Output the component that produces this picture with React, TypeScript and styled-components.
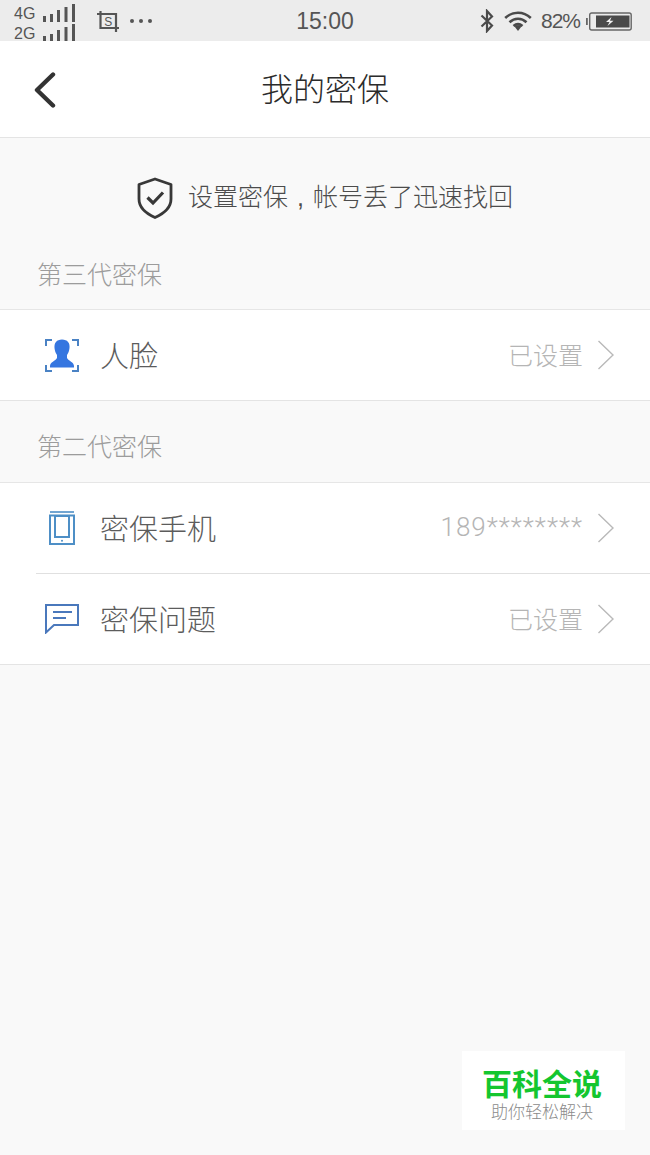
import styled, { createGlobalStyle } from "styled-components"
import { type ReactNode } from "react"

const FONT = `"Noto Sans CJK SC", "Noto Sans", sans-serif`

const GlobalStyle = createGlobalStyle`
    html, body {
        margin: 0;
        padding: 0;
        background: #f9f9f9;
    }
    * {
        box-sizing: border-box;
    }
`

function SignalBars() {
    return (
        <svg width="32" height="18" viewBox="0 0 32 18" fill="#555">
            <rect x="0" y="12" width="3" height="6" />
            <rect x="7" y="10" width="3" height="8" />
            <rect x="14" y="6" width="3" height="12" />
            <rect x="21.5" y="3" width="3" height="15" />
            <rect x="29" y="0" width="3" height="18" />
        </svg>
    )
}

function ScreenshotIcon() {
    return (
        <svg width="22" height="21" viewBox="0 0 22 21" fill="none" stroke="#555">
            <path d="M3.5 0V17H22M0 3H19V21" strokeWidth="2.2" />
            <text x="11.2" y="14.5" textAnchor="middle" fontSize="12" fill="#555" stroke="none" fontFamily="Liberation Sans, sans-serif">
                S
            </text>
        </svg>
    )
}

function BluetoothIcon() {
    return (
        <svg width="14" height="24" viewBox="0 0 14 24" fill="none" stroke="#4a4a4a" strokeWidth="2.2">
            <path d="M1.5 6.5L12 16.5L7 22V2L12 7.5L1.5 17.5" />
        </svg>
    )
}

function WifiIcon() {
    return (
        <svg width="28" height="22" viewBox="0 0 28 22" fill="none" stroke="#4a4a4a" strokeWidth="2.6">
            <path d="M1.2 8C8.5 1 19.5 1 26.8 8" />
            <path d="M5.5 12.2C10.5 7.6 17.5 7.6 22.5 12.2" />
            <path d="M9.5 16C12.3 13.6 15.7 13.6 18.5 16" />
            <path d="M10.5 16.5L14 21L17.5 16.5L14 15Z" fill="#4a4a4a" stroke="none" />
        </svg>
    )
}

function BatteryIcon() {
    return (
        <svg width="46" height="19" viewBox="0 0 46 19" fill="none">
            <rect x="0" y="6" width="1.8" height="7" fill="#666" />
            <rect x="3.7" y="1" width="41.5" height="17" rx="2" stroke="#666" strokeWidth="1.4" />
            <rect x="10" y="3.5" width="33.5" height="12" fill="#4a4a4a" />
            <path d="M25.5 5L20 10H23.5L21.5 14L27.5 8.8H24Z" fill="#f2f2f2" />
        </svg>
    )
}

function BackIcon() {
    return (
        <svg width="22" height="36" viewBox="0 0 22 36" fill="none" stroke="#333" strokeWidth="4.4" strokeLinecap="round" strokeLinejoin="round">
            <path d="M19 2.5L3 18L19 33.5" />
        </svg>
    )
}

function ShieldIcon() {
    return (
        <svg width="36" height="42" viewBox="0 0 36 42" fill="none">
            <path
                d="M18 2L34 7.5V22C34 31 27 36.5 18 40.5C9 36.5 2 31 2 22V7.5Z"
                stroke="#383838"
                strokeWidth="2.8"
                strokeLinejoin="round"
            />
            <path d="M10.5 20.5L16 26L26 15.5" stroke="#383838" strokeWidth="3.2" />
        </svg>
    )
}

function FaceIcon() {
    return (
        <svg width="36" height="35" viewBox="0 0 36 35" fill="none">
            <path
                d="M2 8V2H8M28 2H34V8M2 27V33H8M28 33H34V27"
                stroke="#4a82c4"
                strokeWidth="2"
            />
            <path
                d="M18 1.5C23.5 1.5 26 5 25.5 10C25.2 13 24.3 15 23 17V20C24.5 23 30 24 30 28V29.5H6V28C6 24 11.5 23 13 20V17C11.7 15 10.8 13 10.5 10C10 5 12.5 1.5 18 1.5Z"
                fill="#3576e0"
            />
        </svg>
    )
}

function PhoneIcon() {
    return (
        <svg width="26" height="34" viewBox="0 0 26 34" fill="none" stroke="#4e8fc6" strokeWidth="2">
            <path d="M1 1H25" strokeWidth="1.6" />
            <rect x="1" y="4.5" width="24" height="28.5" />
            <rect x="6" y="5" width="14" height="21" />
            <circle cx="13" cy="29.8" r="1" fill="#4e8fc6" stroke="none" />
        </svg>
    )
}

function ChatIcon() {
    return (
        <svg width="34" height="30" viewBox="0 0 34 30" fill="none" stroke="#4a78bc" strokeWidth="2">
            <path d="M1 1H33V21H9L1 28.5Z" />
            <path d="M8 8H27" />
            <path d="M8 14H21" />
        </svg>
    )
}

function Chevron() {
    return (
        <svg width="18" height="30" viewBox="0 0 18 30" fill="none" stroke="#b9b9b9" strokeWidth="1.4">
            <path d="M1.5 1L16 15L1.5 29" />
        </svg>
    )
}

interface RowProps {
    icon: ReactNode
    label: string
    value: string
    masked?: boolean
    inset?: boolean
}

function Row({ icon, label, value, masked, inset }: RowProps) {
    return (
        <RowWrap $inset={inset}>
            <IconSlot>{icon}</IconSlot>
            <RowLabel>{label}</RowLabel>
            <RowValue $masked={masked}>{value}</RowValue>
            <Chevron />
        </RowWrap>
    )
}

export default function App() {
    return (
        <Page>
            <GlobalStyle />
            <StatusBar>
                <StatusLeft>
                    <Networks>
                        <NetworkLine>
                            <NetworkName>4G</NetworkName>
                            <SignalBars />
                        </NetworkLine>
                        <NetworkLine>
                            <NetworkName>2G</NetworkName>
                            <SignalBars />
                        </NetworkLine>
                    </Networks>
                    <ScreenshotIcon />
                    <Dots>
                        <Dot />
                        <Dot />
                        <Dot />
                    </Dots>
                </StatusLeft>
                <Clock>15:00</Clock>
                <StatusRight>
                    <BluetoothIcon />
                    <WifiIcon />
                    <Percent>82%</Percent>
                    <BatteryIcon />
                </StatusRight>
            </StatusBar>

            <NavBar>
                <BackButton>
                    <BackIcon />
                </BackButton>
                <NavTitle>我的密保</NavTitle>
            </NavBar>

            <Tip>
                <ShieldIcon />
                <TipText>
                    设置密保<Comma>,</Comma>帐号丢了迅速找回
                </TipText>
            </Tip>

            <SectionLabel $first>第三代密保</SectionLabel>
            <List>
                <Row icon={<FaceIcon />} label="人脸" value="已设置" />
            </List>

            <SectionLabel>第二代密保</SectionLabel>
            <List>
                <Row icon={<PhoneIcon />} label="密保手机" value="189********" masked />
                <Row icon={<ChatIcon />} label="密保问题" value="已设置" inset />
            </List>

            <Watermark>
                <WatermarkTitle>百科全说</WatermarkTitle>
                <WatermarkCaption>助你轻松解决</WatermarkCaption>
            </Watermark>
        </Page>
    )
}

const Page = styled.div`
    position: relative;
    width: 650px;
    height: 1155px;
    overflow: hidden;
    background: #f9f9f9;
    font-family: ${FONT};
`

const StatusBar = styled.div`
    display: grid;
    grid-template-columns: 1fr auto 1fr;
    align-items: center;
    height: 41px;
    padding: 0 14px;
    background: #ececec;
    color: #555;
`

const StatusLeft = styled.div`
    display: flex;
    align-items: center;
    gap: 22px;
`

const Networks = styled.div`
    display: flex;
    flex-direction: column;
    padding-top: 2px;
`

const NetworkLine = styled.div`
    display: flex;
    align-items: flex-end;
    gap: 8px;
    height: 20px;
`

const NetworkName = styled.span`
    font-family: "Liberation Sans", sans-serif;
    font-size: 16px;
    line-height: 17px;
    color: #555;
`

const Dots = styled.div`
    display: flex;
    gap: 5px;
    margin-left: -11px;
`

const Dot = styled.span`
    width: 4px;
    height: 4px;
    border-radius: 50%;
    background: #555;
`

const Clock = styled.div`
    font-family: "Liberation Sans", sans-serif;
    font-size: 23px;
    color: #555;
`

const StatusRight = styled.div`
    display: flex;
    align-items: center;
    justify-content: flex-end;
    gap: 10px;
    padding-right: 4px;
`

const Percent = styled.span`
    font-family: "Liberation Sans", sans-serif;
    font-size: 21px;
    letter-spacing: -1px;
    color: #555;
    margin: 0 -4px 0 -1px;
`

const NavBar = styled.div`
    position: relative;
    display: flex;
    align-items: center;
    justify-content: center;
    height: 97px;
    padding-bottom: 4px;
    background: #fff;
    border-bottom: 1px solid #e4e4e4;
`

const BackButton = styled.div`
    position: absolute;
    left: 34px;
    top: 31px;
    display: flex;
`

const NavTitle = styled.div`
    font-size: 32px;
    line-height: 40px;
    font-weight: 300;
    color: #2b2b2b;
`

const Tip = styled.div`
    display: flex;
    align-items: center;
    justify-content: center;
    gap: 15px;
    height: 42px;
    margin-top: 39px;
`

const TipText = styled.div`
    padding-bottom: 4px;
    font-size: 25px;
    line-height: 34px;
    font-weight: 300;
    color: #4c4c4c;
    white-space: nowrap;
`

const Comma = styled.span`
    display: inline-block;
    width: 25px;
    text-align: center;
    font-family: "Liberation Sans", sans-serif;
`

const SectionLabel = styled.div<{ $first?: boolean }>`
    height: ${({ $first }) => ($first ? "90px" : "81px")};
    padding: ${({ $first }) => ($first ? "36px" : "26px")} 0 0 37px;
    font-size: 25px;
    line-height: 36px;
    font-weight: 300;
    color: #9c9c9c;
`

const List = styled.div`
    background: #fff;
    border-top: 1px solid #e6e6e6;
    border-bottom: 1px solid #e4e4e4;
`

const RowWrap = styled.div<{ $inset?: boolean }>`
    position: relative;
    display: flex;
    align-items: center;
    height: ${({ $inset }) => ($inset ? "91px" : "90px")};
    padding: 0 35px 0 0;
    ${({ $inset }) =>
        $inset &&
        `
        &::before {
            content: "";
            position: absolute;
            top: 0;
            left: 36px;
            right: 0;
            height: 1px;
            background: #e0e0e0;
        }
    `}
`

const IconSlot = styled.div`
    display: flex;
    align-items: center;
    justify-content: center;
    width: 47px;
    margin: 0 15px 0 38px;
    flex-shrink: 0;
`

const RowLabel = styled.div`
    flex: 1;
    padding-bottom: 2px;
    font-size: 29px;
    line-height: 40px;
    font-weight: 300;
    color: #5c5c5c;
`

const RowValue = styled.div<{ $masked?: boolean }>`
    margin-right: 14px;
    padding-bottom: 2px;
    font-family: ${({ $masked }) => ($masked ? `Roboto, sans-serif` : FONT)};
    font-size: ${({ $masked }) => ($masked ? "26px" : "25px")};
    letter-spacing: ${({ $masked }) => ($masked ? "1px" : "0")};
    line-height: 34px;
    font-weight: 300;
    color: #b5b5b5;
`

const Watermark = styled.div`
    position: absolute;
    left: 462px;
    top: 1051px;
    width: 163px;
    height: 79px;
    display: flex;
    flex-direction: column;
    align-items: center;
    padding: 15px 3px 0 0;
    background: #fff;
`

const WatermarkTitle = styled.div`
    font-size: 30px;
    line-height: 32px;
    font-weight: 700;
    color: #14c62f;
`

const WatermarkCaption = styled.div`
    margin-top: 2px;
    font-size: 17px;
    line-height: 22px;
    font-weight: 300;
    color: #8a8a8a;
`
